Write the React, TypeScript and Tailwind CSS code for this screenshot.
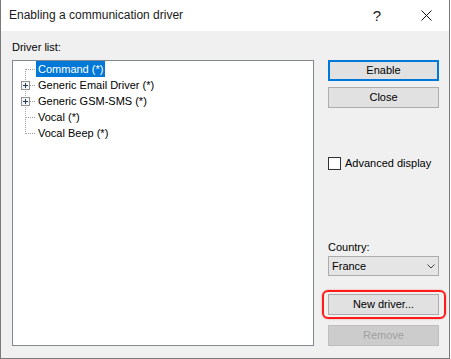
import React from "react";

type Item = { label: string; expandable?: boolean; selected?: boolean };

const items: Item[] = [
  { label: "Command (*)", selected: true },
  { label: "Generic Email Driver (*)", expandable: true },
  { label: "Generic GSM-SMS (*)", expandable: true },
  { label: "Vocal (*)" },
  { label: "Vocal Beep (*)" },
];

function Connector({ first, last, plus }: { first: boolean; last: boolean; plus?: boolean }) {
  return (
    <svg width="20" height="16" className="shrink-0" shapeRendering="crispEdges">
      <line
        x1="9.5"
        y1={first ? 8 : 0}
        x2="9.5"
        y2={last ? 9 : 16}
        stroke="#a0a0a0"
        strokeDasharray="1 1"
      />
      <line x1="10" y1="8.5" x2="19" y2="8.5" stroke="#a0a0a0" strokeDasharray="1 1" />
      {plus && (
        <g>
          <rect x="5.5" y="4.5" width="8" height="8" fill="#f4f4f4" stroke="#919191" />
          <line x1="7" y1="8.5" x2="12" y2="8.5" stroke="#1e395b" />
          <line x1="9.5" y1="6" x2="9.5" y2="11" stroke="#1e395b" />
        </g>
      )}
    </svg>
  );
}

function Button({ children, primary, disabled }: { children: React.ReactNode; primary?: boolean; disabled?: boolean }) {
  return (
    <div
      className={
        "h-[21px] w-[111px] flex items-center justify-center " +
        (primary
          ? "border-2 border-[#0078d7] bg-[#e1e1e1] text-black"
          : disabled
          ? "border border-[#bfbfbf] bg-[#cccccc] text-[#a0a0a0]"
          : "border border-[#adadad] bg-[#e1e1e1] text-black")
      }>
      {children}
    </div>
  );
}

export default function App() {
  return (
    <div
      className="w-[450px] h-[359px] flex flex-col border-x border-b border-[#7a7a7a] bg-[#f0f0f0] text-[11px] leading-[13px]"
      style={{ fontFamily: '"Liberation Sans", Arial, sans-serif' }}>
      {/* title bar */}
      <div className="h-[31px] bg-white flex items-center text-[12px] text-[#1a1a1a]">
        <div className="pl-[8px] flex-1">Enabling a communication driver</div>
        <div className="w-[20px] text-center text-[15px] mr-[34px]">?</div>
        <svg width="11" height="11" className="mr-[17px]">
          <path d="M0.5 0.5 L10.5 10.5 M10.5 0.5 L0.5 10.5" stroke="#111" strokeWidth="1" />
        </svg>
      </div>

      {/* body */}
      <div className="flex-1 flex pl-[11px] pt-[10px]">
        <div className="flex flex-col">
          <div className="h-[13px]">Driver list:</div>
          <div className="mt-[6px] w-[302px] h-[286px] border border-[#828790] bg-white pl-[3px]">
            {items.map((it, i) => (
              <div key={it.label} className="flex h-[16px] items-center">
                <Connector first={i === 0} last={i === items.length - 1} plus={it.expandable} />
                <span
                  className={
                    "h-[16px] flex items-center px-[2px] " +
                    (it.selected ? "bg-[#0078d7] text-white" : "text-black")
                  }>
                  {it.label}
                </span>
              </div>
            ))}
          </div>
        </div>

        <div className="ml-[14px] pt-[19px] flex flex-col">
          <Button primary>Enable</Button>
          <div className="mt-[6px]">
            <Button>Close</Button>
          </div>

          <div className="mt-[49px] flex items-center gap-[4px] h-[13px]">
            <div className="w-[13px] h-[13px] border border-[#333333] bg-white" />
            <span>Advanced display</span>
          </div>

          <div className="mt-[71px] h-[13px]">Country:</div>
          <div className="mt-[2px] h-[20px] w-[111px] border border-[#acacac] bg-[#e5e5e5] flex items-center justify-between pl-[3px] pr-[3px]">
            <span>France</span>
            <svg width="8" height="5">
              <polyline points="0.5,0.5 4,4 7.5,0.5" fill="none" stroke="#444" strokeWidth="1" />
            </svg>
          </div>

          <div className="relative mt-[18px]">
            <Button>New driver...</Button>
            <div className="absolute left-[-6px] right-[-7px] top-[-4px] bottom-[-4px] rounded-[6px] border-2 border-[#ff1a1a] shadow-[0_0_2px_rgba(255,0,0,0.4)]" />
          </div>
          <div className="mt-[10px]">
            <Button disabled>Remove</Button>
          </div>
        </div>
      </div>
    </div>
  );
}
